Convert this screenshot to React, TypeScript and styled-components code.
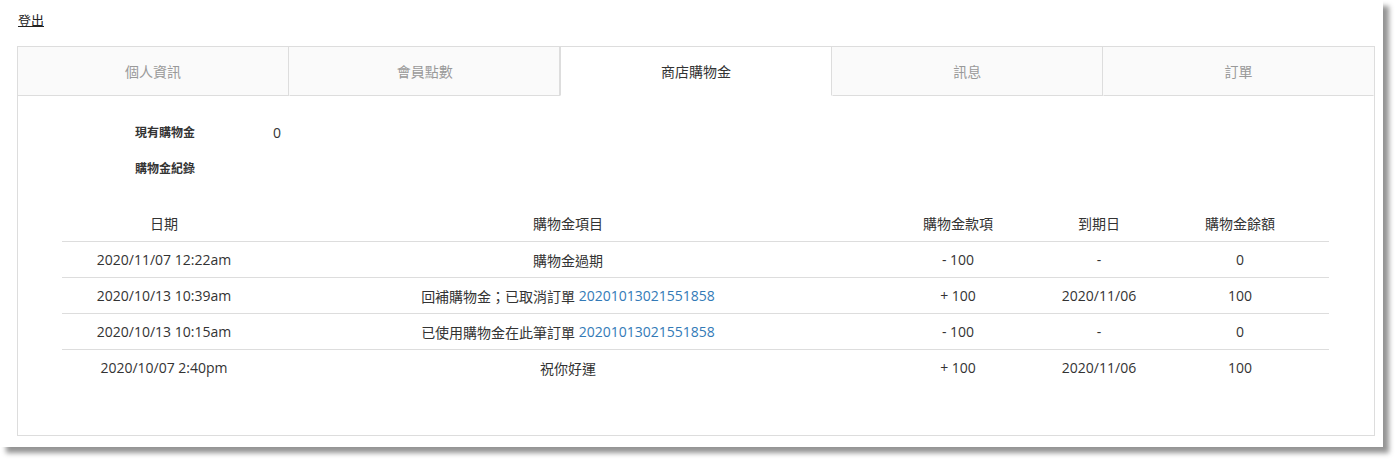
import React from "react";
import styled, { createGlobalStyle } from "styled-components";

type Record = {
  date: string;
  item: string;
  order?: string;
  amount: string;
  expire: string;
  balance: string;
};

const tabs = ["個人資訊", "會員點數", "商店購物金", "訊息", "訂單"];
const activeTab = 2;

const records: Record[] = [
  { date: "2020/11/07 12:22am", item: "購物金過期", amount: "- 100", expire: "-", balance: "0" },
  {
    date: "2020/10/13 10:39am",
    item: "回補購物金；已取消訂單",
    order: "20201013021551858",
    amount: "+ 100",
    expire: "2020/11/06",
    balance: "100",
  },
  {
    date: "2020/10/13 10:15am",
    item: "已使用購物金在此筆訂單",
    order: "20201013021551858",
    amount: "- 100",
    expire: "-",
    balance: "0",
  },
  { date: "2020/10/07 2:40pm", item: "祝你好運", amount: "+ 100", expire: "2020/11/06", balance: "100" },
];

const App: React.FC = () => {
  return (
    <Page>
      <GlobalStyle />
      <Frame>
        <TopBar>
          <Logout href="#">登出</Logout>
        </TopBar>
        <TabBox>
          <TabBar>
            {tabs.map((t, i) => (
              <Tab key={t} $active={i === activeTab}>
                {t}
              </Tab>
            ))}
          </TabBar>
          <Panel>
            <InfoRow>
              <InfoLabel>現有購物金</InfoLabel>
              <InfoValue>0</InfoValue>
            </InfoRow>
            <InfoRow>
              <InfoLabel>購物金紀錄</InfoLabel>
            </InfoRow>
            <Table>
              <HeadRow>
                <Cell>日期</Cell>
                <Cell>購物金項目</Cell>
                <Cell>購物金款項</Cell>
                <Cell>到期日</Cell>
                <Cell>購物金餘額</Cell>
              </HeadRow>
              {records.map((r, i) => (
                <BodyRow key={i} $last={i === records.length - 1}>
                  <Cell>{r.date}</Cell>
                  <Cell>
                    {r.item}
                    {r.order && (
                      <>
                        {" "}
                        <OrderLink href="#">{r.order}</OrderLink>
                      </>
                    )}
                  </Cell>
                  <Cell>{r.amount}</Cell>
                  <Cell>{r.expire}</Cell>
                  <Cell>{r.balance}</Cell>
                </BodyRow>
              ))}
            </Table>
          </Panel>
        </TabBox>
      </Frame>
    </Page>
  );
};

export default App;

const GlobalStyle = createGlobalStyle`
  *, *::before, *::after {
    box-sizing: border-box;
  }
  body {
    margin: 0;
    background: #fff;
    font-family: "Open Sans", "Noto Sans CJK TC", sans-serif;
    color: #333;
  }
`;

const Page = styled.div`
  width: 1398px;
  height: 463px;
  background: #fff;
`;

const Frame = styled.div`
  width: 1383px;
  height: 447px;
  background: #fff;
  box-shadow: 6px 6px 5px rgba(0, 0, 0, 0.42);
  padding: 11px 0 0 17px;
  overflow: hidden;
`;

const TopBar = styled.div`
  height: 18px;
  padding-left: 1px;
  display: flex;
  align-items: center;
`;

const Logout = styled.a`
  font-size: 13px;
  line-height: 18px;
  color: #222;
  text-decoration: underline;
`;

const TabBox = styled.div`
  margin-top: 17px;
  width: 1358px;
  height: 390px;
  border: 1px solid #ddd;
`;

const TabBar = styled.div`
  display: grid;
  grid-template-columns: repeat(5, 1fr);
`;

const Tab = styled.div<{ $active: boolean }>`
  height: 49px;
  display: flex;
  align-items: center;
  justify-content: center;
  font-size: 14px;
  background: ${(p) => (p.$active ? "#fff" : "#fafafa")};
  color: ${(p) => (p.$active ? "#333" : "#999")};
  border-bottom: 1px solid ${(p) => (p.$active ? "transparent" : "#ddd")};
  border-left: 1px solid ${(p) => (p.$active ? "#ddd" : "transparent")};
  border-right: 1px solid ${(p) => (p.$active ? "#ddd" : "transparent")};
  &:first-child {
    border-left: none;
  }
  &:not(:last-child) {
    border-right: 1px solid #ddd;
  }
`;

const Panel = styled.div`
  padding: 18px 45px 0 44px;
`;

const InfoRow = styled.div`
  display: flex;
  align-items: center;
  height: 36px;
  padding-left: 73px;
`;

const InfoLabel = styled.div`
  width: 138px;
  font-size: 12px;
  font-weight: 600;
  color: #333;
`;

const InfoValue = styled.div`
  font-size: 14px;
`;

const Table = styled.div`
  margin-top: 19px;
  font-size: 14px;
`;

const cols = "204px 604px 176px 106px 176px";

const HeadRow = styled.div`
  display: grid;
  grid-template-columns: ${cols};
  height: 37px;
  border-bottom: 1px solid #ddd;
`;

const BodyRow = styled.div<{ $last: boolean }>`
  display: grid;
  grid-template-columns: ${cols};
  height: 36px;
  border-bottom: 1px solid ${(p) => (p.$last ? "transparent" : "#ddd")};
`;

const Cell = styled.div`
  display: flex;
  align-items: center;
  justify-content: center;
  white-space: pre;
`;

const OrderLink = styled.a`
  color: #337ab7;
  text-decoration: none;
`;
